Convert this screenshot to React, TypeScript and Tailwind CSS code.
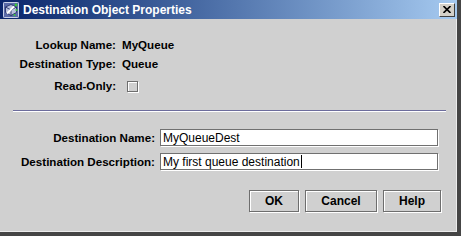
import React from "react";

const font = { fontFamily: '"Liberation Sans", Arial, sans-serif' };

function TitleIcon() {
  return (
    <svg width="16" height="16" viewBox="0 0 16 16">
      <rect x="0" y="0" width="16" height="16" rx="1" fill="#5a6aa8" />
      <rect x="0.5" y="0.5" width="15" height="15" rx="1" fill="none" stroke="#c8d0e8" strokeWidth="1" />
      <path d="M2.5 5 L8 2.5 L13.5 5 L13.5 10.5 L8 13.5 L2.5 10.5 Z" fill="#b8c0dc" stroke="#26306a" strokeWidth="0.9" />
      <path d="M2.5 5 L8 8 L13.5 5 M8 8 L8 13.5" fill="none" stroke="#26306a" strokeWidth="0.9" />
      <path d="M4 11.5 L11 4.5" stroke="#ffffff" strokeWidth="1.8" />
      <circle cx="13" cy="3" r="1.4" fill="#3cc83c" />
      <circle cx="13.5" cy="8" r="1.1" fill="#3cc83c" />
      <circle cx="11.5" cy="13" r="1.1" fill="#3cc83c" />
    </svg>
  );
}

function Button({ w, children }: { w: string; children: React.ReactNode }) {
  return (
    <div
      className={`${w} h-[22px] flex items-center justify-center border border-[#6e6e6e] bg-[#d0d0d0] text-[12px] font-bold text-black shadow-[1px_1px_0_#ffffff,inset_1px_1px_0_#ffffff]`}
    >
      {children}
    </div>
  );
}

export default function App() {
  return (
    <div
      style={font}
      className="w-[461px] h-[236px] flex flex-col bg-[#d0d0d0] border-r-4 border-b-4 border-[#454545] text-black overflow-hidden"
    >
      <div className="h-[19px] flex items-center bg-gradient-to-r from-[#0a246a] to-[#a6caf0] pl-[3px]">
        <TitleIcon />
        <span className="ml-[4px] text-white font-bold text-[12px] leading-none">
          Destination Object Properties
        </span>
        <div className="ml-auto mr-[2px] w-[16px] h-[14px] bg-[#d4d0c8] border border-t-white border-l-white border-r-[#404040] border-b-[#404040] flex items-center justify-center">
          <svg width="8" height="7" viewBox="0 0 8 7">
            <path d="M0.5 0 L7.5 7 M7.5 0 L0.5 7" stroke="#000" strokeWidth="1.6" />
          </svg>
        </div>
      </div>

      <div className="flex-1 flex flex-col border-r border-b border-[#ececec]">
        <div className="pt-[17px] grid grid-cols-[116px_auto] grid-rows-[18px_20px_24px] gap-x-[6px] text-[11.6px] font-bold items-center">
          <div className="text-right">Lookup Name:</div>
          <div>MyQueue</div>
          <div className="text-right">Destination Type:</div>
          <div>Queue</div>
          <div className="text-right">Read-Only:</div>
          <div className="ml-[5px] w-[11px] h-[11px] border border-[#6e6e6e] bg-[#d0d0d0] shadow-[1px_1px_0_#ffffff,inset_1px_1px_0_#ffffff]" />
        </div>

        <div className="mt-[12px] ml-[13px] w-[433px] h-[2px] border-t border-[#6c6c9c] border-b border-b-white" />

        <div className="mt-[17px] grid grid-cols-[155px_278px] grid-rows-[17px_17px] gap-x-[5px] gap-y-[7px] items-center">
          <div className="text-right text-[11.6px] font-bold">Destination Name:</div>
          <div className="h-[17px] border border-[#707070] bg-white shadow-[1px_1px_0_#ffffff] flex items-center pl-[2px] text-[12px]">
            MyQueueDest
          </div>
          <div className="text-right text-[11.6px] font-bold">Destination Description:</div>
          <div className="h-[17px] border border-[#707070] bg-white shadow-[1px_1px_0_#ffffff] flex items-center pl-[2px] text-[12px]">
            <span>My first queue destination</span>
            <span className="ml-[1px] w-px h-[13px] bg-black" />
          </div>
        </div>

        <div className="mt-[20px] flex justify-end gap-[6px] pr-[15px]">
          <Button w="w-[50px]">OK</Button>
          <Button w="w-[72px]">Cancel</Button>
          <Button w="w-[58px]">Help</Button>
        </div>
      </div>
    </div>
  );
}
